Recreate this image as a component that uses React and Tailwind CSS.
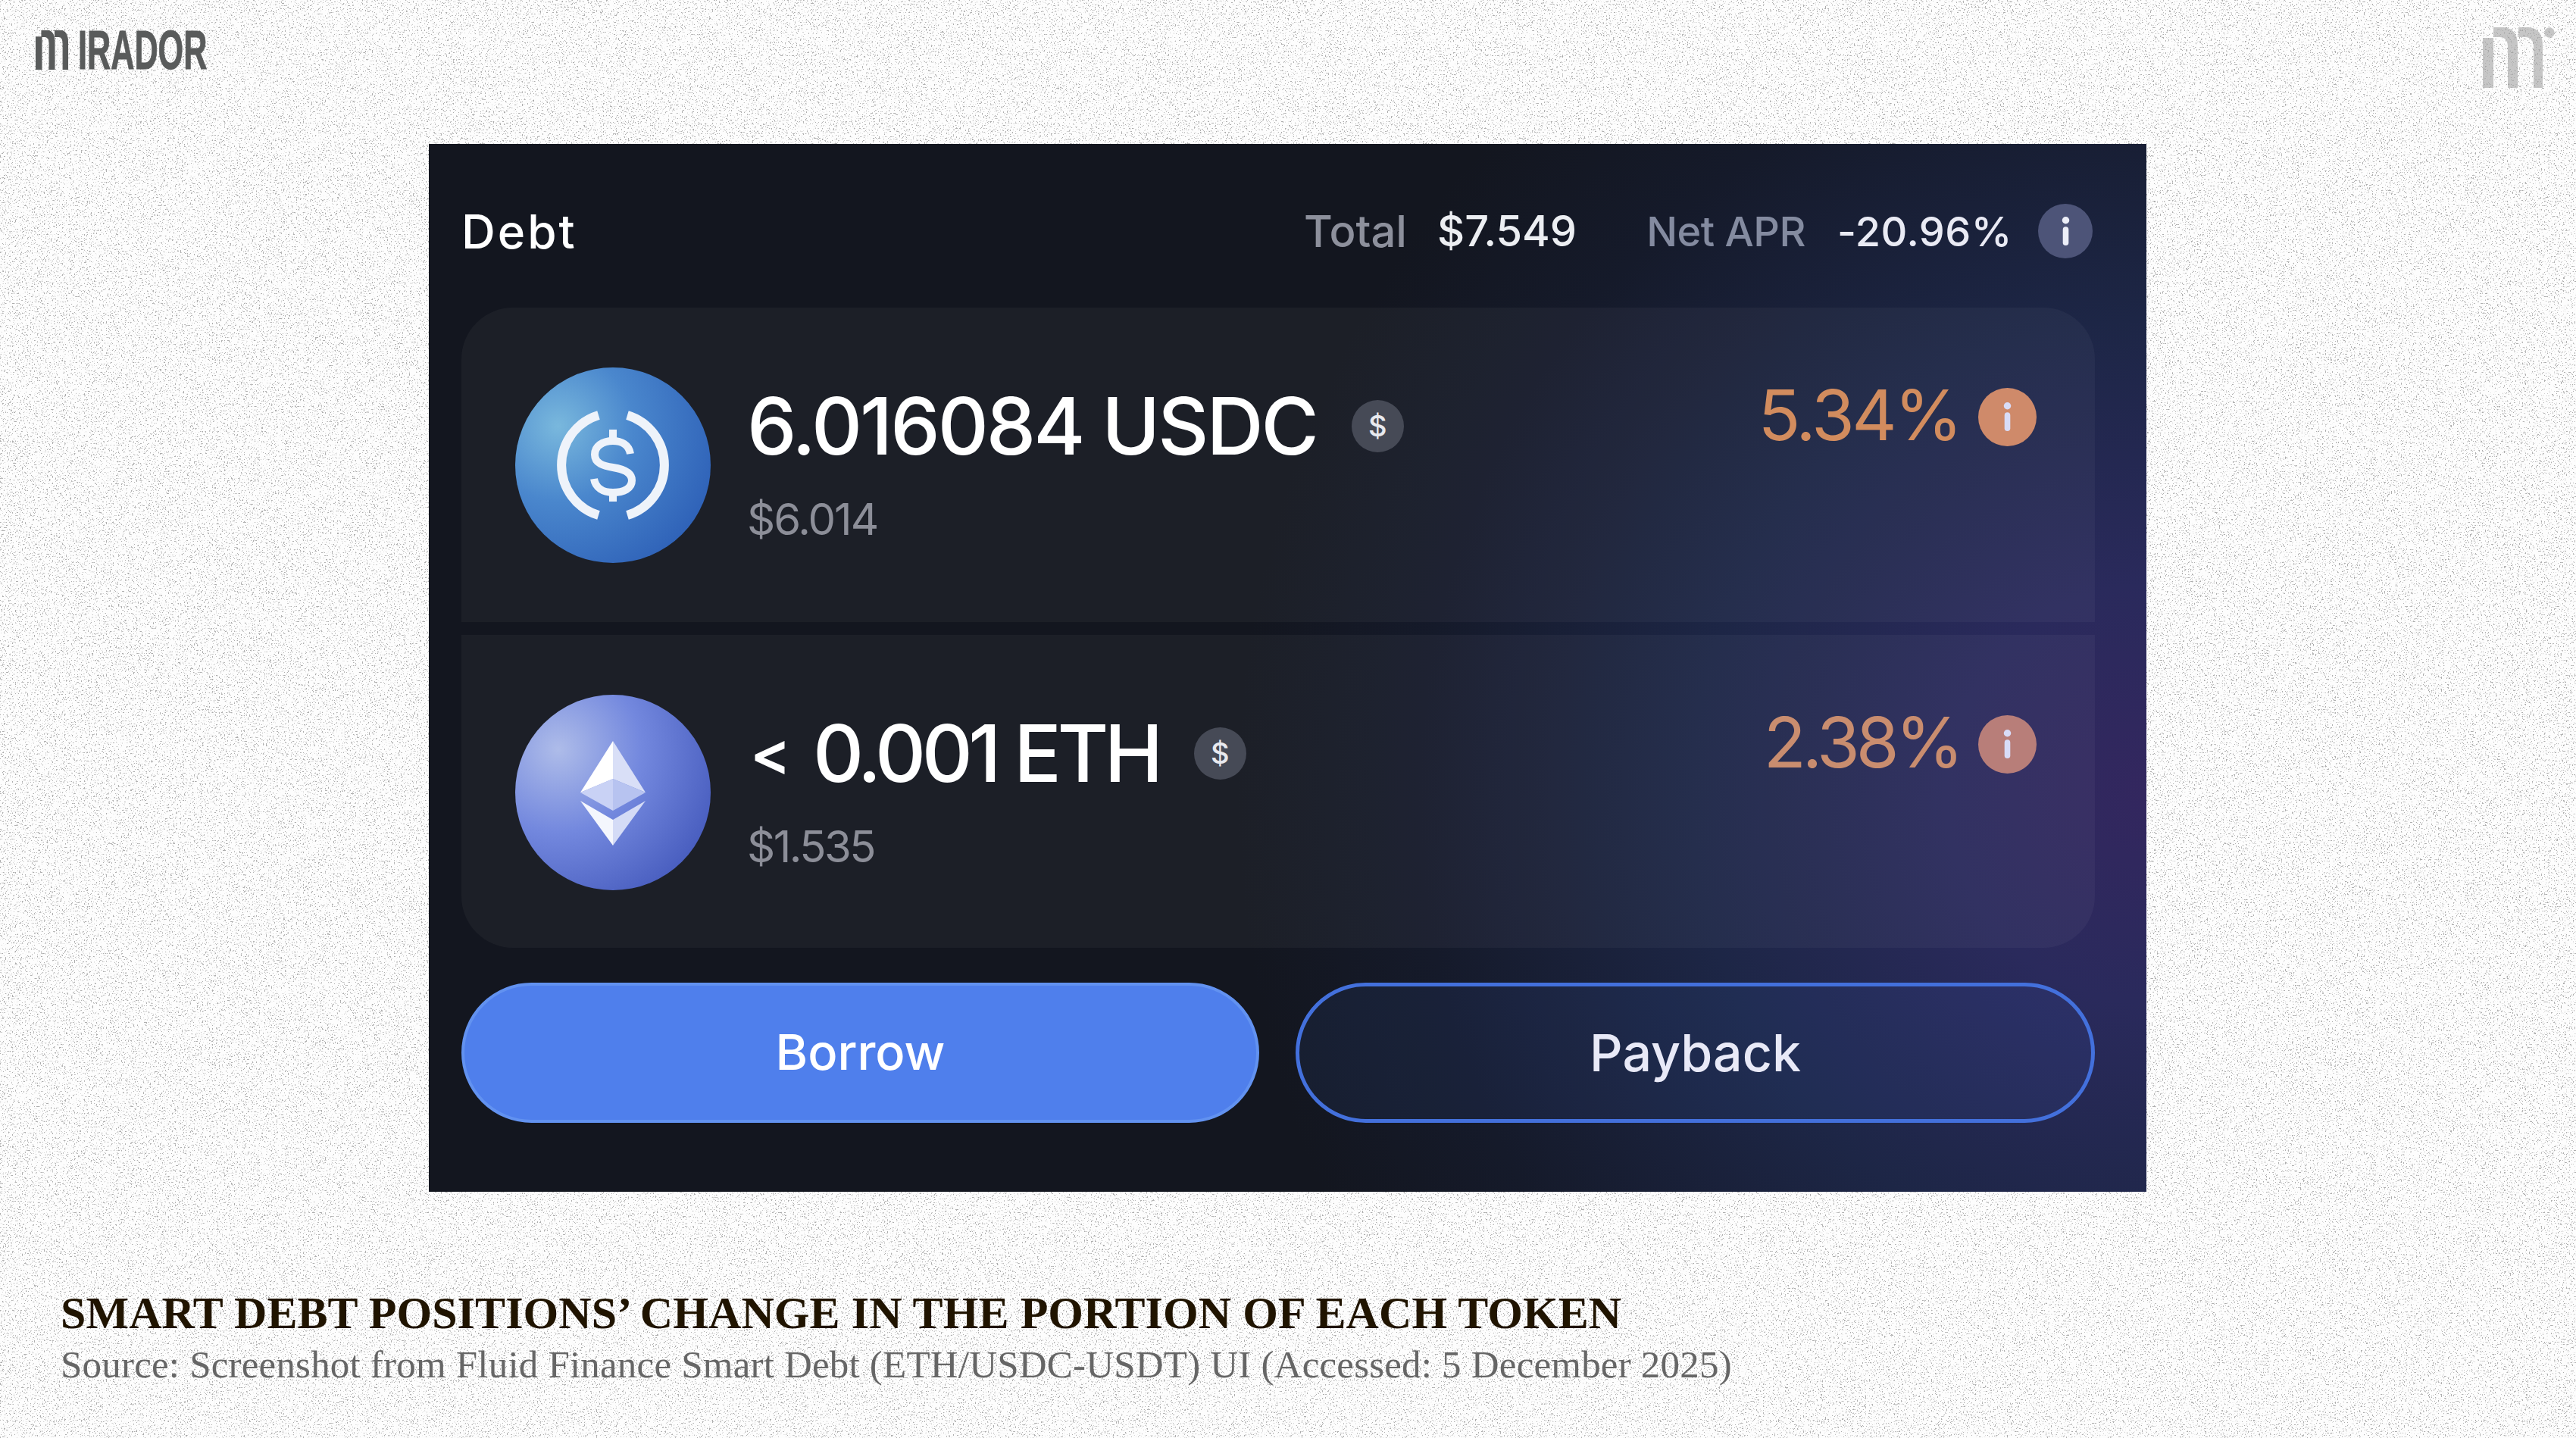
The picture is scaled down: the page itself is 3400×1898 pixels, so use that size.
import React from 'react';

const uiFont = "font-['Inter','Liberation_Sans',sans-serif]";

// paper grain behind the whole slide
const PaperGrain = () => (
  <svg className="absolute inset-0 w-full h-full pointer-events-none" aria-hidden="true">
    <filter id="paper" x="0" y="0" width="100%" height="100%">
      <feTurbulence type="fractalNoise" baseFrequency="0.55" numOctaves="3" seed="7" />
      <feColorMatrix values="0 0 0 0 0.42  0 0 0 0 0.42  0 0 0 0 0.42  11 0 0 0 -6.75" />
    </filter>
    <rect width="100%" height="100%" filter="url(#paper)" />
  </svg>
);

const MiradorMark = ({ className, fill, dot = false, strokeWidth = 0 }) => (
  <svg viewBox="0 0 96 81" preserveAspectRatio="none" className={className} aria-hidden="true">
    <path
      fill={fill}
      stroke={fill}
      strokeWidth={strokeWidth}
      d="M1 14h14v66H1zM15 0h11c15 0 21 9 21 24v56H34V26c0-8-4-13-11-13h-8zM48 0h11c15 0 21 9 21 24v56H68V26c0-8-4-13-11-13h-9z"
    />
    {dot && <circle cx="89" cy="7" r="6.7" fill={fill} />}
  </svg>
);

const UsdcIcon = () => (
  <svg viewBox="-129 -129 258 258" className="w-[258px] h-[258px] shrink-0" aria-hidden="true">
    <defs>
      <radialGradient id="usdcFill" cx="22%" cy="30%" r="85%">
        <stop offset="0%" stopColor="#79b8dd" />
        <stop offset="45%" stopColor="#4a87cd" />
        <stop offset="100%" stopColor="#2f62b8" />
      </radialGradient>
    </defs>
    <circle r="129" fill="url(#usdcFill)" />
    <g fill="none" stroke="#eef3fa" strokeWidth="12">
      <path d="M-19 -66A69 69 0 0 0 -19 66" />
      <path d="M19 -66A69 69 0 0 1 19 66" />
    </g>
    <g fill="none" stroke="#eef3fa" strokeWidth="10">
      <path d="M23 -15C21 -27 11 -32 0 -32C-14 -32 -24 -25 -24 -14C-24 -2 -12 1 0 3C13 5 25 9 25 20C25 31 14 36 0 36C-13 36 -23 30 -25 18" />
      <path d="M0 -47V-32M0 36V48" />
    </g>
  </svg>
);

const EthIcon = () => (
  <svg viewBox="-129 -129 258 258" className="w-[258px] h-[258px] shrink-0" aria-hidden="true">
    <defs>
      <radialGradient id="ethFill" cx="22%" cy="28%" r="85%">
        <stop offset="0%" stopColor="#aebce9" />
        <stop offset="50%" stopColor="#7388de" />
        <stop offset="100%" stopColor="#4a5fc0" />
      </radialGradient>
    </defs>
    <circle r="129" fill="url(#ethFill)" />
    <path d="M0 -68L-43 0L0 -18z" fill="#ffffff" />
    <path d="M0 -68L43 0L0 -18z" fill="#d9dff7" />
    <path d="M-43 0L0 -18L0 24z" fill="#c9d2f5" />
    <path d="M43 0L0 -18L0 24z" fill="#b7c3f0" />
    <path d="M-43 11L0 36L0 70z" fill="#f4f6fd" />
    <path d="M43 11L0 36L0 70z" fill="#d4dbf6" />
  </svg>
);

const InfoDot = ({ className, dotColor }) => (
  <span className={`flex items-center justify-center rounded-full shrink-0 ${className}`}>
    <svg viewBox="0 0 20 40" className="w-[19px] h-[38px]" aria-hidden="true">
      <circle cx="10" cy="5" r="5" fill={dotColor} />
      <rect x="6" y="14" width="8" height="26" rx="4" fill={dotColor} />
    </svg>
  </span>
);

const DollarBadge = () => (
  <span className="flex items-center justify-center w-[69px] h-[69px] rounded-full bg-[#464a56] text-[#e8e9ee] text-[38px] font-medium ml-[46px] tracking-normal">
    $
  </span>
);

const PositionRow = ({ icon, prefix, amount, usd, apr, rowClass, aprColor, aprBadge, amountClass, usdClass, aprClass }) => (
  <div className={`flex items-start pl-[71px] pr-[77px] bg-white/[.04] ${rowClass}`}>
    <div className="mt-[79px]">{icon}</div>
    <div className="ml-[48px] pt-[101px]">
      <div className="flex items-center h-[110px] text-white text-[104px] font-medium leading-[110px]">
        {prefix && <span className="w-[87px] pl-[4px] text-[80px] font-semibold">{prefix}</span>}
        <span className={amountClass}>{amount}</span>
        <DollarBadge />
      </div>
      <div className={`mt-[38px] h-[60px] text-[#8c8e98] text-[58px] leading-[60px] ${usdClass}`}>{usd}</div>
    </div>
    <div className="ml-auto mt-[94px] h-[100px] flex items-center">
      <span className={`pb-[4px] text-[92px] leading-[100px] ${aprColor} ${aprClass}`}>{apr}</span>
      <InfoDot className={`ml-[24px] w-[77px] h-[77px] ${aprBadge}`} dotColor="#d8dcf8" />
    </div>
  </div>
);

export default function App() {
  return (
    <div className={`relative w-[3400px] h-[1898px] overflow-hidden bg-[#fdfdfd] ${uiFont}`}>
      <PaperGrain />

      <div className="relative h-[190px]">
        <div className="flex justify-between items-start pl-[47px] pr-[28px] pt-[36px]">
          <div className="flex items-center h-[52px] mt-[4px]">
            <MiradorMark className="w-[51px] h-[52px] shrink-0" fill="#595b5b" strokeWidth={2} />
            <span className="ml-[5px] origin-left scale-x-[.6] text-[72px] leading-[52px] font-bold text-[#595b5b] [-webkit-text-stroke:1px_#595b5b] font-['Liberation_Sans',sans-serif]">
              IRADOR
            </span>
          </div>
          <MiradorMark className="w-[96px] h-[81px] opacity-60" fill="#a3a3a3" dot />
        </div>
      </div>

      <section className="relative ml-[566px] w-[2267px] h-[1383px] pl-[43px] pr-[68px] flex flex-col bg-[#13161f] bg-[radial-gradient(ellipse_1200px_1250px_at_100%_62%,#33275f_0%,#2a2a5c_22%,#1d2646_50%,#151a2a_80%,#13161f_100%)]">
        <header className="h-[216px] pt-[14px] pr-[3px] flex items-center justify-between shrink-0">
          <h2 className="text-white text-[62px] font-medium tracking-[3px]">Debt</h2>
          <div className="flex items-center font-medium">
            <span className="text-[#8d909c] text-[58px]">Total</span>
            <span className="ml-[40px] text-[#eceef2] text-[56px]">$7.549</span>
            <span className="ml-[92px] text-[#848ba0] text-[54px] tracking-[-.5px]">Net APR</span>
            <span className="ml-[42px] text-[#e9eaf4] text-[54px] tracking-[.5px]">-20.96%</span>
            <InfoDot className="ml-[34px] w-[72px] h-[72px] bg-[#4d5478]" dotColor="#eceef8" />
          </div>
        </header>

        <PositionRow
          rowClass="h-[415px] rounded-t-[68px]"
          icon={<UsdcIcon />}
          amount="6.016084 USDC"
          amountClass="tracking-[-3px]"
          usd="$6.014"
          usdClass="tracking-[-2px]"
          apr="5.34%"
          aprClass="tracking-[-3.5px]"
          aprColor="text-[#d28c5e]"
          aprBadge="bg-[#cf8a6a]"
        />
        <PositionRow
          rowClass="mt-[17px] h-[413px] rounded-b-[68px]"
          icon={<EthIcon />}
          prefix="<"
          amount="0.001 ETH"
          amountClass="tracking-[-5.5px]"
          usd="$1.535"
          usdClass="tracking-[-2.5px]"
          apr="2.38%"
          aprClass="tracking-[-5px]"
          aprColor="text-[#c98d6f]"
          aprBadge="bg-[#b87e79]"
        />

        <div className="mt-[46px] flex gap-[48px] h-[185px]">
          <button type="button" className="flex-1 pb-[2px] rounded-full bg-[#4f7fec] border-[4px] border-[#6292f0] text-white text-[65px] font-medium">
            Borrow
          </button>
          <button type="button" className="flex-1 pb-[2px] rounded-full bg-[#4f7fec]/[.08] border-[5px] border-[#4370dc] text-[#e8e9f7] text-[68px] font-medium">
            Payback
          </button>
        </div>
      </section>

      <div className="relative ml-[80px] mt-[130px]">
        <h1 className="text-[60px] leading-[60px] font-bold text-[#201400] tracking-[.08px] font-['Liberation_Serif',serif]">
          SMART DEBT POSITIONS’ CHANGE IN THE PORTION OF EACH TOKEN
        </h1>
        <p className="mt-[13px] text-[51px] leading-[50px] text-[#666666] tracking-[.2px] font-['Liberation_Serif',serif]">
          Source: Screenshot from Fluid Finance Smart Debt (ETH/USDC-USDT) UI (Accessed: 5 December 2025)
        </p>
      </div>
    </div>
  );
}
